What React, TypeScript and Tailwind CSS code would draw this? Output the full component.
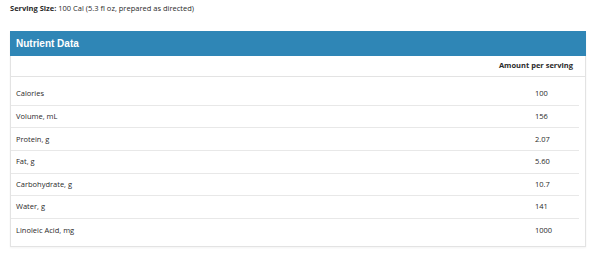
export default function App() {
  const rows = [
    { name: "Calories", value: "100" },
    { name: "Volume, mL", value: "156" },
    { name: "Protein, g", value: "2.07" },
    { name: "Fat, g", value: "5.60" },
    { name: "Carbohydrate, g", value: "10.7" },
    { name: "Water, g", value: "141" },
    { name: "Linoleic Acid, mg", value: "1000" },
  ];

  return (
    <div className="w-[600px] h-[257px] bg-white font-['Open_Sans',sans-serif] text-[#2a2a2a]">
      <div className="px-[10px] pt-[2px] h-[31px]">
        <p className="text-[7.5px] leading-[12px]">
          <span className="font-bold">Serving Size:</span> 100 Cal (5.3 fl oz, prepared as directed)
        </p>
      </div>

      <div className="mx-[10px] w-[576px] h-[216px] border border-[#e3e3e3] border-t-0 shadow-[0_1px_2px_rgba(0,0,0,0.05)]">
        {/* Header */}
        <div className="h-[25px] bg-[#2f86b6] flex items-center px-[6px] -mx-px">
          <h2 className="text-white font-bold text-[10px] font-['Liberation_Sans',Arial,sans-serif]">
            Nutrient Data
          </h2>
        </div>

        <div className="flex justify-end items-center h-[21px] border-b border-[#e3e3e3] pr-[12px]">
          <span className="font-bold text-[7.5px]">Amount per serving</span>
        </div>

        <div className="pt-[6px] pr-[6px]">
          {rows.map((row, i) => (
            <div
              key={row.name}
              className={
                "flex items-center h-[22.67px] pl-[5px] text-[7.5px] " +
                (i < rows.length - 1 ? "border-b border-[#e8e8e8]" : "")
              }
            >
              <span className="flex-1">{row.name}</span>
              <span className="w-[44px]">{row.value}</span>
            </div>
          ))}
        </div>
      </div>
    </div>
  );
}
